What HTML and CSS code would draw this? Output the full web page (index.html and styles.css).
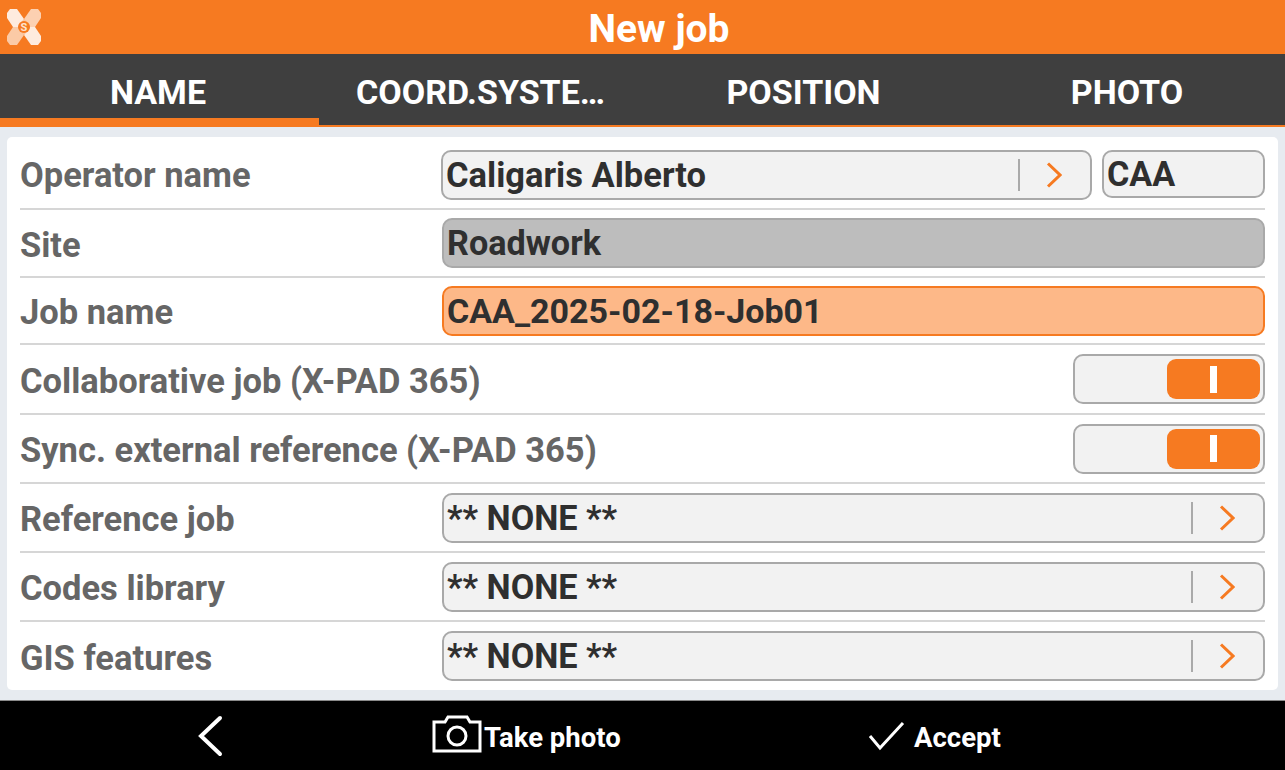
FILE: index.html
```html
<!DOCTYPE html>
<html lang="en">
<head>
  <meta charset="UTF-8">
  <title>New job</title>
  <link rel="stylesheet" href="styles.css">
</head>
<body>

  <div class="header">
    <svg class="logo" viewBox="0 0 36 36" width="36" height="36">
      <path d="M18 10 L24 18 L18 26 L12 18 Z" fill="#fff" opacity="0.6"/>
      <path d="M1 4 L4 0 H11 L18 10 L12 18 H7 L1 9 Z" fill="#fff" opacity="0.85"/>
      <path d="M25 0 H32 L35 4 V9 L29 18 H24 L18 10 Z" fill="#fff" opacity="0.65"/>
      <path d="M7 18 H12 L18 26 L11 36 H4 L1 32 V27 Z" fill="#fff" opacity="0.6"/>
      <path d="M24 18 H29 L35 27 V32 L32 36 H25 L18 26 Z" fill="#fff" opacity="0.85"/>
      <circle cx="18" cy="18" r="6" fill="#f67a21"/>
      <text class="logo-s" x="18" y="22" text-anchor="middle">S</text>
    </svg>
    <h1>New job</h1>
  </div>

  <div class="tabs">
    <div class="tab tab-active">NAME</div>
    <div class="tab">COORD.SYSTE…</div>
    <div class="tab">POSITION</div>
    <div class="tab tab-last">PHOTO</div>
  </div>

  <div class="content">
    <div class="panel">

      <div class="row row-first">
        <span class="label">Operator name</span>
        <div class="fields">
          <div class="field field-select field-operator">
            <span class="value">Caligaris Alberto</span>
            <span class="divider"></span>
            <svg class="chevron" viewBox="0 0 16 26" width="16" height="26"><path d="M2 1.500 L14 13 L2 24.500"/></svg>
          </div>
          <div class="field field-code"><span class="value">CAA</span></div>
        </div>
      </div>

      <div class="row">
        <span class="label">Site</span>
        <div class="field field-disabled"><span class="value">Roadwork</span></div>
      </div>

      <div class="row">
        <span class="label">Job name</span>
        <div class="field field-active"><span class="value">CAA_2025-02-18-Job01</span></div>
      </div>

      <div class="row">
        <span class="label">Collaborative job (X-PAD 365)</span>
        <div class="toggle"><div class="toggle-knob"><span class="toggle-bar"></span></div></div>
      </div>

      <div class="row">
        <span class="label">Sync. external reference (X-PAD 365)</span>
        <div class="toggle"><div class="toggle-knob"><span class="toggle-bar"></span></div></div>
      </div>

      <div class="row">
        <span class="label">Reference job</span>
        <div class="field field-select">
          <span class="value">** NONE **</span>
          <span class="divider"></span>
          <svg class="chevron" viewBox="0 0 16 26" width="16" height="26"><path d="M2 1.500 L14 13 L2 24.500"/></svg>
        </div>
      </div>

      <div class="row">
        <span class="label">Codes library</span>
        <div class="field field-select">
          <span class="value">** NONE **</span>
          <span class="divider"></span>
          <svg class="chevron" viewBox="0 0 16 26" width="16" height="26"><path d="M2 1.500 L14 13 L2 24.500"/></svg>
        </div>
      </div>

      <div class="row">
        <span class="label">GIS features</span>
        <div class="field field-select">
          <span class="value">** NONE **</span>
          <span class="divider"></span>
          <svg class="chevron" viewBox="0 0 16 26" width="16" height="26"><path d="M2 1.500 L14 13 L2 24.500"/></svg>
        </div>
      </div>

    </div>
  </div>

  <div class="footer">
    <svg class="back-icon" viewBox="0 0 26 42" width="26" height="42"><path d="M23 3 L4 21 L23 39"/></svg>
    <div class="footer-item footer-photo">
      <svg class="camera-icon" viewBox="0 0 50 38" width="50" height="38">
        <path d="M2 7 H13 L16 2 H35 L38 7 H48 V36 H2 Z"/>
        <circle cx="25" cy="21" r="9"/>
      </svg>
      <span class="footer-text">Take photo</span>
    </div>
    <div class="footer-item footer-accept">
      <svg class="check-icon" viewBox="0 0 37 30" width="37" height="30"><path d="M2 15 L12 27 L35 2"/></svg>
      <span class="footer-text">Accept</span>
    </div>
  </div>

</body>
</html>
```

FILE: styles.css
```css
*{
  box-sizing: border-box;
}

body{
  margin: 0;
  width: 1285px;
  height: 770px;
  overflow: hidden;
  font-family: Roboto, "Liberation Sans", sans-serif;
  background-color: #e7ebf0;
}

.header{
  position: relative;
  height: 54px;
  background-color: #f67a21;
  text-align: center;
}

.logo{
  position: absolute;
  left: 6px;
  top: 9px;
}

.logo-s{
  font-size: 11px;
  font-weight: 700;
  fill: #fde3d0;
}

h1{
  margin: 0;
  padding-left: 33px;
  font-size: 39px;
  line-height: 58px;
  font-weight: 700;
  color: white;
}

.tabs{
  display: grid;
  grid-template-columns: 319px 323px 323px 320px;
  height: 73px;
  background-color: #3f3f3f;
}

.tab{
  height: 73px;
  padding-top: 18px;
  border-bottom: 2px solid #f67a21;
  text-align: center;
  font-size: 34px;
  line-height: 40px;
  font-weight: 700;
  color: white;
}

.tab-active{
  padding-right: 3px;
  border-bottom: 9px solid #f67a21;
}

.tab-last{
  padding-left: 4px;
}

.content{
  height: 573px;
  padding: 10px 7px;
}

.panel{
  display: grid;
  grid-template-rows: 73px 68px 67px 70px 69px 69px 69px 68px;
  height: 553px;
  padding: 0 13px;
  background-color: white;
  border-radius: 5px;
}

.row{
  display: flex;
  align-items: center;
  justify-content: space-between;
  border-bottom: 2px solid #d6d6d6;
}

.row-first{
  padding-top: 4px;
}

.row-first .label{
  padding-top: 1px;
}

.row:last-child{
  border-bottom: none;
}

.label{
  padding-top: 3px;
  font-size: 34.5px;
  font-weight: 700;
  color: #666;
}

.fields{
  display: flex;
  gap: 10px;
  width: 824px;
}

.field{
  display: flex;
  align-items: center;
  width: 823px;
  height: 50px;
  padding-left: 3px;
  background-color: #f2f2f2;
  border: 2px solid #a9a9a9;
  border-radius: 10px;
}

.field-operator{
  flex: none;
  width: 651px;
}

.field-code{
  flex: none;
  align-self: flex-start;
  width: 163px;
  height: 48px;
}

.field-disabled{
  background-color: #bdbdbd;
}

.field-active{
  background-color: #fdb888;
  border-color: #f67a21;
}

.value{
  flex: 1;
  font-size: 34.2px;
  font-weight: 700;
  color: #2f2f2f;
}

.field-operator .value{
  font-size: 34.5px;
}

.field-active .value{
  font-size: 34px;
}

.divider{
  width: 2px;
  height: 32px;
  margin-right: 26px;
  background-color: #aaa;
}

.chevron{
  margin-right: 28px;
}

.chevron path{
  fill: none;
  stroke: #f67a21;
  stroke-width: 3;
}

.toggle{
  display: flex;
  align-items: center;
  justify-content: flex-end;
  width: 192px;
  height: 50px;
  padding-right: 3px;
  background-color: #f2f2f2;
  border: 2px solid #a9a9a9;
  border-radius: 10px;
}

.toggle-knob{
  display: flex;
  align-items: center;
  justify-content: center;
  width: 93px;
  height: 40px;
  background-color: #f67a21;
  border-radius: 9px;
}

.toggle-bar{
  width: 7px;
  height: 27px;
  background-color: white;
}

.footer{
  display: flex;
  align-items: center;
  height: 70px;
  padding-left: 197px;
  background-color: black;
  border-top: 1px solid #8a8a8a;
}

.footer-item{
  display: flex;
  align-items: center;
}

.back-icon{
  margin-right: 209px;
}

.back-icon path,
.check-icon path,
.camera-icon path,
.camera-icon circle{
  fill: none;
  stroke: white;
  stroke-width: 3;
}

.back-icon path{
  stroke-width: 4;
  stroke-linecap: round;
}

.footer-photo{
  width: 436px;
}

.camera-icon{
  margin-right: 2px;
  margin-bottom: 3px;
}

.check-icon{
  margin-right: 9px;
}

.footer-text{
  padding-top: 4px;
  font-size: 27.5px;
  font-weight: 700;
  color: white;
}
```
